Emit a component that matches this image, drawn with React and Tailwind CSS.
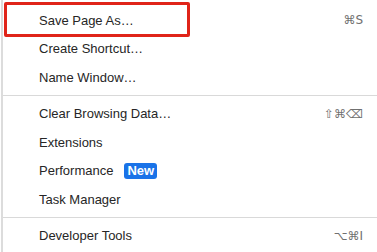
import React from "react";

const font = { fontFamily: '"Liberation Sans", Arial, "DejaVu Sans", sans-serif' };

const MenuItem = ({ label, shortcut, badge }) => {
  return (
    <div className="flex h-[28.5px] items-center justify-between pl-[36px] pr-[14px]">
      <div className="flex items-center">
        <span className="text-[13px] text-[#262626]">{label}</span>
        {badge && (
          <span className="ml-[11px] flex h-[16px] items-center rounded-[3px] bg-[#1a73e8] px-[3px] text-[13px] font-bold text-white">
            {badge}
          </span>
        )}
      </div>
      {shortcut && (
        <span className="text-[13px] text-[#707070]" style={{ fontFamily: '"DejaVu Sans", "Liberation Sans", sans-serif', fontSize: "12px" }}>
          {shortcut}
        </span>
      )}
    </div>
  );
};

const Separator = () => (
  <div className="py-[3.5px]">
    <div className="h-px bg-[#d9d9d9]" />
  </div>
);

export default function App() {
  return (
    <div className="relative h-[252px] w-[377px] overflow-hidden bg-white" style={font}>
      <div className="flex h-full">
        {/* left edge of the menu */}
        <div className="w-[1px] bg-white" />
        <div className="w-[2px] bg-[#dcdcdc]" />
        <div className="flex-1 pt-[6px]">
          <MenuItem label="Save Page As…" shortcut="⌘S" />
          <MenuItem label="Create Shortcut…" />
          <MenuItem label="Name Window…" />
          <Separator />
          <MenuItem label="Clear Browsing Data…" shortcut="⇧⌘⌫" />
          <MenuItem label="Extensions" />
          <MenuItem label="Performance" badge="New" />
          <MenuItem label="Task Manager" />
          <Separator />
          <MenuItem label="Developer Tools" shortcut="⌥⌘I" />
        </div>
      </div>

      {/* highlight annotation */}
      <div className="absolute left-[4px] top-[2px] h-[35px] w-[186px] rounded-[2px] border-[3px] border-[#e02419]" />
    </div>
  );
}
